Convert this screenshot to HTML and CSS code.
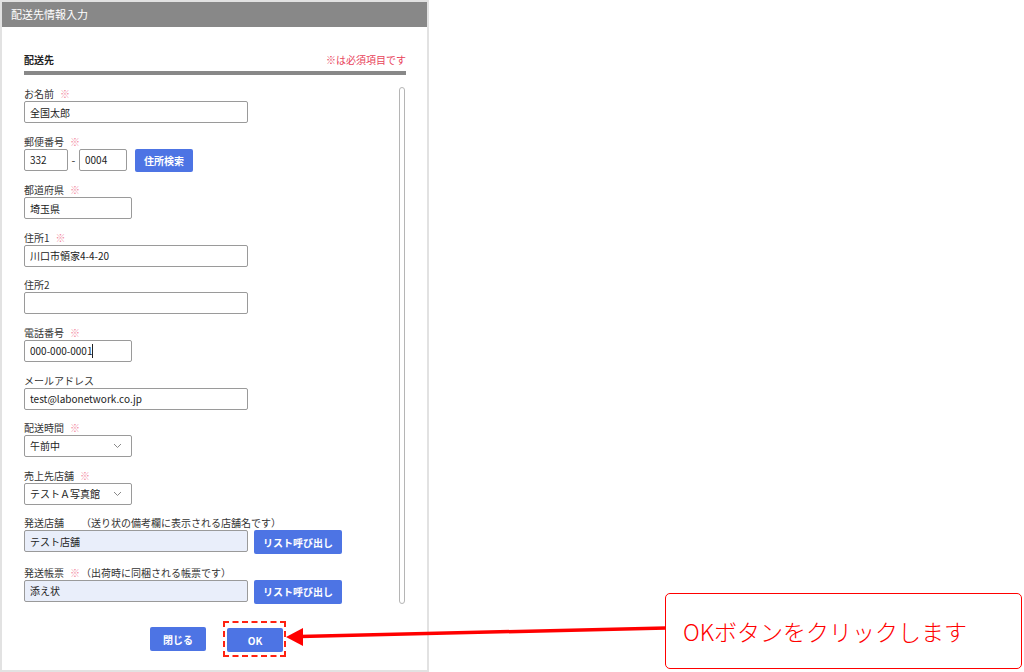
FILE: index.html
```html
<!DOCTYPE html>
<html lang="ja">
<head>
    <meta charset="UTF-8">
    <title>配送先情報入力</title>
    <link rel="stylesheet" href="styles.css">
</head>
<body>

    <div class="dialog">
        <div class="dialog-head">配送先情報入力</div>
        <div class="dialog-body">
            <div class="section-title">
                <span>配送先</span>
                <span class="required-note">※は必須項目です</span>
            </div>
            <div class="section-bar"></div>

            <div class="form-area">
                <div class="fields">
                    <div class="field">
                        <label>お名前<span class="req">※</span></label>
                        <input class="input long" type="text" value="全国太郎">
                    </div>
                    <div class="field">
                        <label>郵便番号<span class="req">※</span></label>
                        <div class="row">
                            <input class="input zip1" type="text" value="332">
                            <span class="dash">-</span>
                            <input class="input zip2" type="text" value="0004">
                            <button class="btn btn-search">住所検索</button>
                        </div>
                    </div>
                    <div class="field">
                        <label>都道府県<span class="req">※</span></label>
                        <input class="input short" type="text" value="埼玉県">
                    </div>
                    <div class="field">
                        <label>住所1<span class="req">※</span></label>
                        <input class="input long" type="text" value="川口市領家4-4-20">
                    </div>
                    <div class="field">
                        <label>住所2</label>
                        <input class="input long" type="text" value="">
                    </div>
                    <div class="field">
                        <label>電話番号<span class="req">※</span></label>
                        <div class="input short fake">000-000-0001<span class="caret"></span></div>
                    </div>
                    <div class="field">
                        <label>メールアドレス</label>
                        <input class="input long" type="text" value="test@labonetwork.co.jp">
                    </div>
                    <div class="field">
                        <label>配送時間<span class="req">※</span></label>
                        <div class="input short select">
                            <span>午前中</span>
                            <svg width="9" height="6" viewBox="0 0 9 6"><path d="M1 1 L4.5 4.5 L8 1" fill="none" stroke="#888" stroke-width="1"/></svg>
                        </div>
                    </div>
                    <div class="field">
                        <label>売上先店舗<span class="req">※</span></label>
                        <div class="input short select">
                            <span>テストＡ写真館</span>
                            <svg width="9" height="6" viewBox="0 0 9 6"><path d="M1 1 L4.5 4.5 L8 1" fill="none" stroke="#888" stroke-width="1"/></svg>
                        </div>
                    </div>
                    <div class="field">
                        <label>発送店舗<span class="note wide">（送り状の備考欄に表示される店舗名です）</span></label>
                        <div class="row">
                            <input class="input long tinted" type="text" value="テスト店舗">
                            <button class="btn btn-list">リスト呼び出し</button>
                        </div>
                    </div>
                    <div class="field">
                        <label>発送帳票<span class="req">※</span><span class="note">（出荷時に同梱される帳票です）</span></label>
                        <div class="row">
                            <input class="input long tinted" type="text" value="添え状">
                            <button class="btn btn-list">リスト呼び出し</button>
                        </div>
                    </div>
                </div>
                <div class="scroll-rail"></div>
            </div>

            <div class="dialog-foot">
                <button class="btn btn-foot">閉じる</button>
                <span class="highlight">
                    <button class="btn btn-foot">OK</button>
                </span>
            </div>
        </div>
    </div>

    <svg class="arrow" width="1024" height="672" viewBox="0 0 1024 672">
        <line x1="666" y1="628" x2="300" y2="636.5" stroke="#f00" stroke-width="3.5"/>
        <polygon points="286,637 303,628 303,646" fill="#f00"/>
    </svg>

    <div class="callout">OKボタンをクリックします</div>

</body>
</html>
```

FILE: styles.css
```css
body {
    margin: 0;
    font-family: "Noto Sans CJK JP", "Noto Sans", sans-serif;
    background: #fff;
    color: #333;
    width: 1024px;
    height: 672px;
    overflow: hidden;
    position: relative;
}

.dialog {
    width: 429px;
    height: 672px;
    box-sizing: border-box;
    border: 2px solid #e2e2e2;
    background: #fff;
}

.dialog-head {
    height: 25px;
    line-height: 25px;
    background: #888;
    color: #fff;
    font-size: 11px;
    padding-left: 9px;
}

.dialog-body {
    padding: 26px 21px 0 22px;
}

.section-title {
    display: flex;
    justify-content: space-between;
    font-size: 10px;
    line-height: 14px;
    font-weight: 700;
    color: #222;
}

.section-title .required-note {
    font-weight: 400;
    color: #e8425a;
}

.section-bar {
    height: 4px;
    background: #888;
    margin-top: 4px;
}

.form-area {
    display: flex;
    height: 517px;
    margin-top: 12px;
}

.fields {
    flex: 1;
    overflow: hidden;
}

.scroll-rail {
    width: 4px;
    border: 1px solid #b5b5b5;
    border-radius: 3px;
    margin-right: 1px;
}

.field {
    margin-bottom: 11.6px;
}

.field label {
    display: block;
    font-size: 10px;
    line-height: 14px;
    color: #333;
}

.req {
    color: #f28aa0;
    margin-left: 6px;
}

.note {
    margin-left: 1px;
}

.note.wide {
    margin-left: 17px;
}

.row {
    display: flex;
    align-items: flex-start;
}

.input {
    display: block;
    height: 22px;
    box-sizing: border-box;
    border: 1px solid #9a9a9a;
    border-radius: 2px;
    padding: 0 5px;
    font-family: inherit;
    font-size: 10px;
    line-height: 20px;
    color: #222;
    background: #fff;
    margin: 0;
}

.input.long {
    width: 224px;
}

.input.short {
    width: 108px;
}

.input.zip1 {
    width: 44px;
}

.input.zip2 {
    width: 48px;
}

.input.tinted {
    background: #e9eefa;
}

.fake {
    display: flex;
    align-items: center;
}

.caret {
    display: inline-block;
    width: 1px;
    height: 14px;
    background: #222;
}

.select {
    display: flex;
    align-items: center;
    justify-content: space-between;
    padding-right: 9px;
}

.dash {
    width: 11px;
    text-align: center;
    font-size: 11px;
    line-height: 22px;
}

.btn {
    background: #4d74e4;
    color: #fff;
    border: none;
    border-radius: 2px;
    font-family: inherit;
    font-size: 10px;
    font-weight: 700;
    height: 24px;
    padding: 0;
    margin: 0;
}

.btn-search {
    width: 58px;
    height: 23px;
    margin-left: 8px;
}

.btn-list {
    width: 88px;
    margin-left: 6px;
}

.dialog-foot {
    display: flex;
    justify-content: center;
    align-items: center;
    margin-top: 17px;
    padding-left: 6px;
    gap: 17px;
}

.btn-foot {
    width: 56px;
}

.highlight {
    display: block;
    border: 2px dashed #f21;
    padding: 5px 1px 3px 2px;
    line-height: 0;
}

.arrow {
    position: absolute;
    top: 0;
    left: 0;
    pointer-events: none;
}

.callout {
    position: absolute;
    left: 665px;
    top: 593px;
    width: 357px;
    height: 76px;
    box-sizing: border-box;
    border: 1.5px solid #f00;
    border-radius: 5px;
    background: #fff;
    color: #f00;
    font-size: 23px;
    line-height: 74px;
    padding-left: 17px;
    font-weight: 300;
}
```
